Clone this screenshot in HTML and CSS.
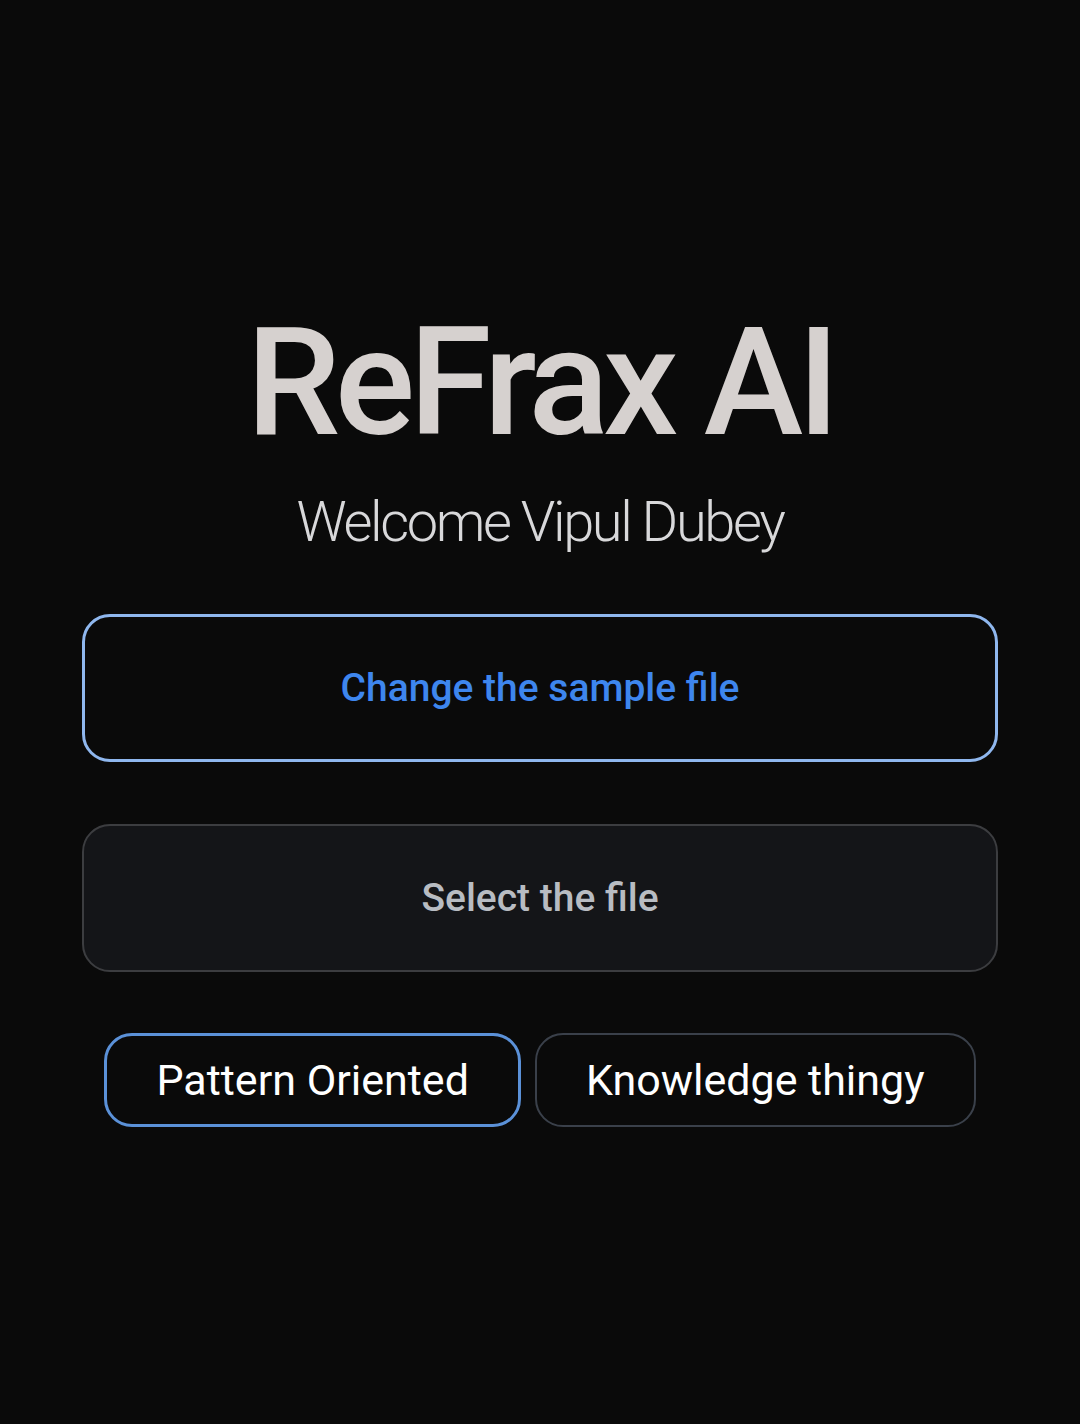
FILE: index.html
```html
<!DOCTYPE html>
<html>
<head>
<meta charset="utf-8">
<link rel="stylesheet" href="styles.css">
</head>
<body>
<main class="screen">
  <h1 class="title">ReFrax AI</h1>
  <p class="welcome">Welcome Vipul Dubey</p>
  <button class="btn btn-primary">Change the sample file</button>
  <button class="btn btn-secondary">Select the file</button>
  <div class="modes">
    <button class="pill pill-active">Pattern Oriented</button>
    <button class="pill">Knowledge thingy</button>
  </div>
</main>
</body>
</html>
```

FILE: styles.css
```css
html, body {
  margin: 0;
  padding: 0;
  background: #0a0a0a;
}
body {
  width: 1080px;
  height: 1424px;
  font-family: Roboto, "Noto Sans", sans-serif;
  overflow: hidden;
}
.screen {
  display: flex;
  flex-direction: column;
  align-items: center;
  padding-top: 308px;
}
.title {
  margin: 0;
  font-size: 150px;
  line-height: 150px;
  font-weight: 500;
  color: #d6d1cf;
  letter-spacing: -6px;
}
.welcome {
  margin: 36px 0 0;
  font-size: 56px;
  line-height: 56px;
  font-weight: 300;
  color: #d8d8da;
  letter-spacing: -2.4px;
}
.btn {
  box-sizing: border-box;
  width: 916px;
  height: 148px;
  border-radius: 28px;
  font-family: Roboto, sans-serif;
  font-size: 39px;
  font-weight: 500;
  cursor: pointer;
}
.btn-primary {
  margin-top: 64px;
  background: #0a0a0a;
  border: 3px solid #8fb7ee;
  color: #3e86ee;
}
.btn-secondary {
  margin-top: 62px;
  background: #141518;
  border: 2.5px solid #3c3d40;
  color: #b8bcc2;
}
.modes {
  margin-top: 61px;
  display: flex;
  gap: 14px;
  justify-content: center;
}
.pill {
  box-sizing: border-box;
  height: 94px;
  padding: 0 49px;
  border-radius: 28px;
  background: #0a0a0a;
  border: 2.5px solid #3a404a;
  color: #ffffff;
  font-family: Roboto, sans-serif;
  font-size: 43px;
  font-weight: 400;
}
.pill-active {
  border: 3px solid #5b91d8;
}
```
